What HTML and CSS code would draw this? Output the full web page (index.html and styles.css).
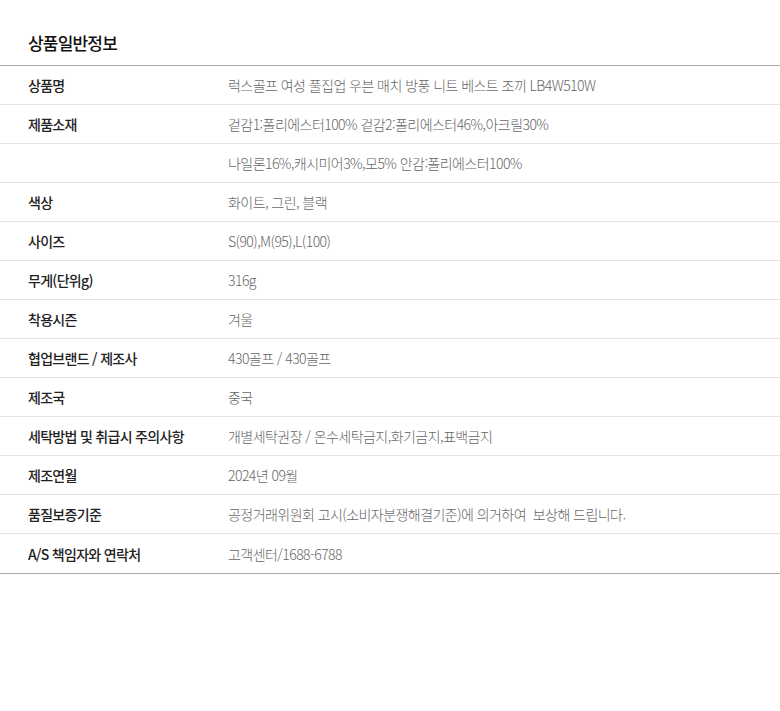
FILE: index.html
```html
<!DOCTYPE html>
<html lang="ko">
<head>
<meta charset="utf-8">
<link rel="stylesheet" href="styles.css">
</head>
<body>
<div class="info">
  <h2 class="title">상품일반정보</h2>
  <div class="table">
    <div class="row"><div class="th">상품명</div><div class="td">럭스골프 여성 풀집업 우븐 매치 방풍 니트 베스트 조끼 LB4W510W</div></div>
    <div class="row"><div class="th">제품소재</div><div class="td">겉감1:폴리에스터100% 겉감2:폴리에스터46%,아크릴30%</div></div>
    <div class="row"><div class="th"></div><div class="td">나일론16%,캐시미어3%,모5% 안감:폴리에스터100%</div></div>
    <div class="row"><div class="th">색상</div><div class="td">화이트, 그린, 블랙</div></div>
    <div class="row"><div class="th">사이즈</div><div class="td">S(90),M(95),L(100)</div></div>
    <div class="row"><div class="th">무게(단위g)</div><div class="td">316g</div></div>
    <div class="row"><div class="th">착용시즌</div><div class="td">겨울</div></div>
    <div class="row"><div class="th">협업브랜드 / 제조사</div><div class="td">430골프 / 430골프</div></div>
    <div class="row"><div class="th">제조국</div><div class="td">중국</div></div>
    <div class="row"><div class="th">세탁방법 및 취급시 주의사항</div><div class="td">개별세탁권장 / 온수세탁금지,화기금지,표백금지</div></div>
    <div class="row"><div class="th">제조연월</div><div class="td">2024년 09월</div></div>
    <div class="row"><div class="th">품질보증기준</div><div class="td">공정거래위원회 고시(소비자분쟁해결기준)에 의거하여&nbsp; 보상해 드립니다.</div></div>
    <div class="row"><div class="th">A/S 책임자와 연락처</div><div class="td">고객센터/1688-6788</div></div>
  </div>
</div>
</body>
</html>
```
FILE: styles.css
```css
html, body {
  margin: 0;
  padding: 0;
  background: #fff;
}
body {
  font-family: "Noto Sans CJK KR", "Noto Sans", sans-serif;
}
.info {
  padding-top: 30px;
}
.title {
  margin: 0;
  padding: 0 28px;
  font-size: 17px;
  font-weight: 500;
  color: #111;
  line-height: 25px;
  height: 25px;
  letter-spacing: -0.8px;
  padding-bottom: 10px;
}
.table {
  border-top: 1px solid #aaaaaa;
  border-bottom: 1px solid #aaaaaa;
}
.row {
  display: flex;
  align-items: center;
  height: 38px;
  border-bottom: 1px solid #e3e3e3;
}
.row:last-child {
  border-bottom: none;
  height: 39px;
}
.th {
  width: 200px;
  padding-left: 28px;
  font-size: 14px;
  font-weight: 500;
  color: #222;
  letter-spacing: -0.7px;
}
.td {
  font-size: 14px;
  font-weight: 300;
  color: #666;
  letter-spacing: -0.55px;
}
```
